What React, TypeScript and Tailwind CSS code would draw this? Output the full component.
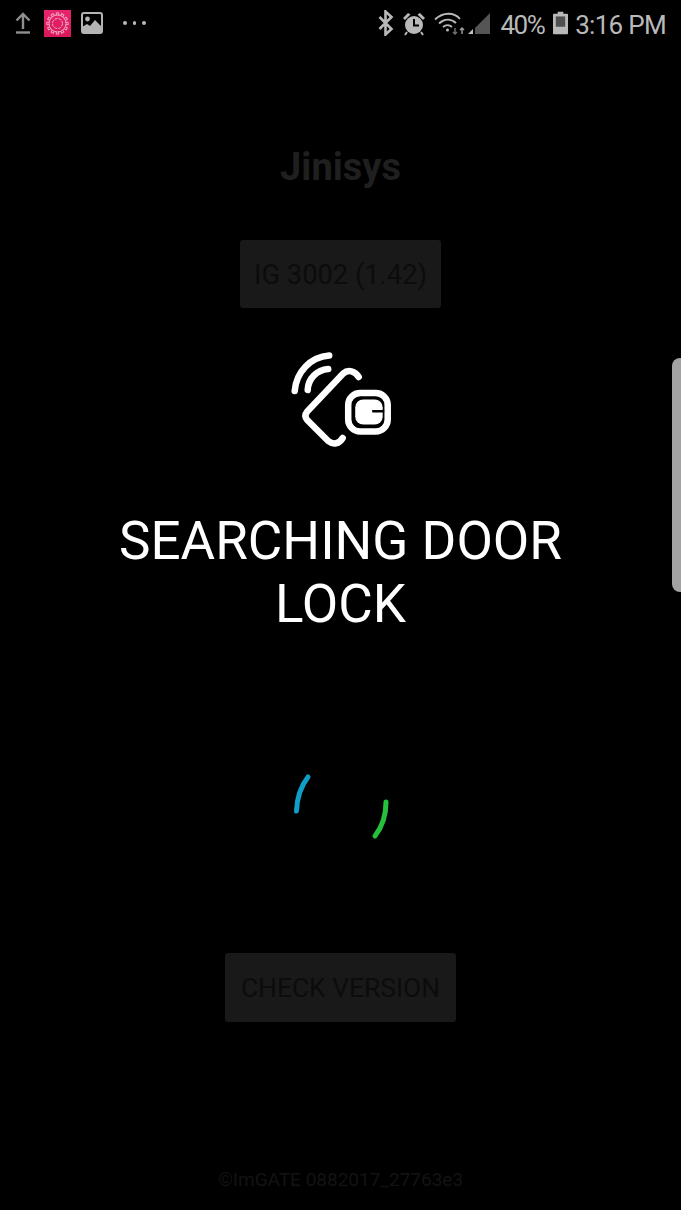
const roboto = "font-['Roboto',sans-serif]";

function UploadIcon() {
  return (
    <svg width="18" height="24" viewBox="0 0 18 24" fill="none" stroke="#8f8f8f" strokeWidth="2.4">
      <path d="M9 18V3M2.5 9.5 9 3l6.5 6.5" />
      <path d="M2 21.5h14" />
    </svg>
  );
}

function SettingsApp() {
  const teeth = Array.from({ length: 12 }, (_, i) => i * 30);
  return (
    <div className="h-[27px] w-[27px] bg-gradient-to-b from-[#e8246c] to-[#d9175a]">
      <svg width="27" height="27" viewBox="0 0 27 27" fill="none" stroke="#f3a9c4" strokeWidth="1">
        <circle cx="13.5" cy="13.5" r="8.5" />
        <circle cx="13.5" cy="13.5" r="5" strokeDasharray="3 1" />
        {teeth.map((a) => (
          <path key={a} d="M12.3 5.200V2.800H14.700V5.200" transform={`rotate(${a} 13.5 13.5)`} />
        ))}
      </svg>
    </div>
  );
}

function PictureIcon() {
  return (
    <svg width="22" height="22" viewBox="0 0 22 22">
      <rect x="1" y="1" width="20" height="20" rx="2" fill="none" stroke="#b4b4b4" strokeWidth="2" />
      <circle cx="6.500" cy="7" r="2.400" fill="#b4b4b4" />
      <path d="M1 20v-5l5-3 3 2 5-6 7 7v5z" fill="#b4b4b4" />
    </svg>
  );
}

function BluetoothIcon() {
  return (
    <svg width="16" height="26" viewBox="0 0 16 26" fill="none" stroke="#b9b9b9" strokeWidth="2.600">
      <path d="M1.500 7l12 12-6 5.500V1.500L13.500 7l-12 12" />
    </svg>
  );
}

function AlarmIcon() {
  return (
    <svg width="22" height="25" viewBox="0 0 22 25">
      <circle cx="11" cy="14" r="9" fill="#b9b9b9" />
      <path d="M0 7l5-5 2.500 1.500L2 9zM22 7l-5-5-2.500 1.500L20 9z" fill="#b9b9b9" />
      <path d="M4 21 2 24M18 21l2 3" stroke="#b9b9b9" strokeWidth="2" />
      <path d="M11 8v6.500h5" fill="none" stroke="#000" strokeWidth="2" />
    </svg>
  );
}

function WifiIcon() {
  return (
    <svg width="34" height="24" viewBox="0 0 34 24" fill="none" stroke="#b9b9b9" strokeWidth="1.900">
      <path d="M1 8.500C9 1 20 1 26 8" />
      <path d="M5 12.500C10.500 7.500 17 7.500 22 12" />
      <path d="M9 16c3-2.500 6-2.500 9 0" />
      <circle cx="13.500" cy="19" r="1.500" fill="#b9b9b9" stroke="none" />
      <path d="M21 17v6M19 21l2 2 2-2" stroke="#6d6d6d" strokeWidth="1.500" />
      <path d="M28 23v-6M26 19l2-2 2 2" stroke="#9a9a9a" strokeWidth="1.500" />
    </svg>
  );
}

function SignalIcon() {
  return (
    <svg width="22" height="24" viewBox="0 0 22 24">
      <path d="M7 17 22 2v21H7z" fill="#555" />
      <path d="M0 23l5-5v5z" fill="#c4c4c4" />
    </svg>
  );
}

function BatteryIcon() {
  return (
    <svg width="15" height="24" viewBox="0 0 16 24">
      <path d="M5 0h6v2h4a1 1 0 0 1 1 1v20a1 1 0 0 1-1 1H1a1 1 0 0 1-1-1V3a1 1 0 0 1 1-1h4z" fill="#b9b9b9" />
      <rect x="3" y="5" width="10" height="11" fill="#4f4f4f" />
    </svg>
  );
}

function StatusBar() {
  return (
    <div className={`flex h-[46px] items-center justify-between pr-[15px] pl-[14px] text-[26px] text-[#b9b9b9] ${roboto}`}>
      <div className="flex items-center">
        <UploadIcon />
        <div className="ml-[12px]">
          <SettingsApp />
        </div>
        <div className="ml-[10px]">
          <PictureIcon />
        </div>
        <div className="ml-[20px] flex gap-[6px]">
          <span className="h-[3.5px] w-[3.5px] rounded-full bg-[#b9b9b9]" />
          <span className="h-[3.5px] w-[3.5px] rounded-full bg-[#b9b9b9]" />
          <span className="h-[3.5px] w-[3.5px] rounded-full bg-[#b9b9b9]" />
        </div>
      </div>
      <div className="flex items-center">
        <BluetoothIcon />
        <div className="ml-[9px]">
          <AlarmIcon />
        </div>
        <div className="ml-[9px]">
          <WifiIcon />
        </div>
        <SignalIcon />
        <span className="mt-[3px] ml-[10px] leading-none tracking-[-1.5px]">40%</span>
        <div className="ml-[9px]">
          <BatteryIcon />
        </div>
        <span className="mt-[3px] ml-[7px] leading-none tracking-[-0.7px]">3:16 PM</span>
      </div>
    </div>
  );
}

function DoorLogo() {
  return (
    <svg width="140" height="120" viewBox="0 0 140 120" fill="none" stroke="#fff" strokeLinecap="round" strokeLinejoin="round">
      <g transform="translate(-0.800 0)">
        <g strokeWidth="6.500">
          <path d="M59 15.500C40 17 26 32 24.500 51" />
          <path d="M58 29C47 30 38 38 37.500 50" />
          <path d="M88.500 37C85 31 78 29 73 33.500L37 71.500C34.500 74.500 34.500 77 37 80L58 101C63 105 69 104 72.500 98" />
          <rect x="78" y="53" width="39.500" height="38.500" rx="12" />
        </g>
        <rect x="85" y="59.500" width="27.500" height="25" rx="8" fill="#fff" stroke="none" />
        <rect x="102" y="70" width="12" height="2.500" fill="#000" stroke="none" />
      </g>
    </svg>
  );
}

function Spinner() {
  return (
    <svg width="140" height="90" viewBox="0 0 140 90" fill="none" strokeWidth="5" strokeLinecap="round">
      <path d="M37 17C30 26 26 38 25.500 51" stroke="#0f9fc6" />
      <path d="M115 42C115 55 111 67 104 76" stroke="#25c13c" />
    </svg>
  );
}

export default function App() {
  return (
    <div className={`relative h-[1210px] w-[681px] overflow-hidden bg-black ${roboto}`}>
      <StatusBar />
      <main className="flex flex-col items-center">
        <h1 className="mt-[101px] text-[38px] leading-[40px] font-bold text-[#1f1f1f]">Jinisys</h1>
        <div className="mt-[53px] flex h-[68px] w-[201px] items-center justify-center rounded-[3px] bg-[#191919] pt-[2px] text-[27.300px] text-[#0c0c0c]">
          IG 3002 (1.42)
        </div>
        <div className="mt-[32px] h-[120px]">
          <DoorLogo />
        </div>
        <p className="mt-[50px] w-[520px] text-center text-[53px] leading-[63px] text-white">SEARCHING DOOR LOCK</p>
        <div className="mt-[124px] h-[90px]">
          <Spinner />
        </div>
        <button className={`mt-[103px] h-[69px] w-[231px] rounded-[3px] bg-[#191919] pt-[2px] text-[26.400px] text-[#0c0c0c] ${roboto}`}>
          CHECK VERSION
        </button>
        <p className="mt-[146px] text-[19px] leading-[24px] text-[#131313]">©ImGATE 0882017_27763e3</p>
      </main>
      <div className="absolute top-[358px] right-0 h-[234px] w-[9px] rounded-l-[8px] bg-[#a3a3a3]" />
    </div>
  );
}
